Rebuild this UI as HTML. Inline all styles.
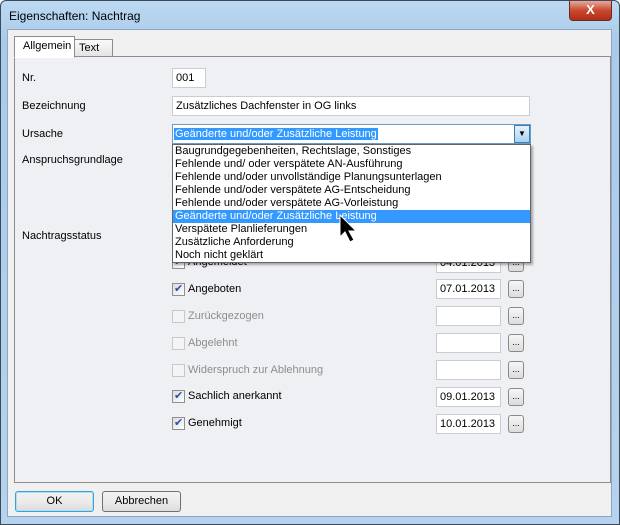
<!DOCTYPE html><html><head><style>
*{margin:0;padding:0;box-sizing:border-box}
body{width:620px;height:525px;overflow:hidden;font-family:"Liberation Sans",sans-serif;font-size:11px;color:#000;background:#fff}
.win{position:absolute;left:0;top:0;width:620px;height:525px;background:linear-gradient(#bcd9f2,#a9cbe9 40px,#b5d3ee);border:1px solid #3c4a5a;border-radius:6px 6px 0 0}
.title{position:absolute;left:8px;top:8px;font-size:12px}
.close{position:absolute;left:568px;top:0;width:43px;height:20px;background:linear-gradient(#e9a99b,#c8492f 50%,#b22c14);border:1px solid #6b2a1d;border-top:none;border-radius:0 0 4px 4px;color:#fff;text-align:center;font-weight:bold;font-size:13px;line-height:18px}
.client{position:absolute;left:7px;top:29px;width:605px;height:488px;background:#f0f0f0;border:1px solid #8ea6bf}
.panel{position:absolute;left:14px;top:56px;width:597px;height:427px;background:#eef0f4;border:1px solid #8d8d8d}
.tab{position:absolute;border:1px solid #8d8d8d;border-bottom:none;background:#fff}
.abs{position:absolute}
.in{position:absolute;background:#fff;border:1px solid #c8cdd4;height:20px;line-height:18px;padding-left:3px;font-size:11px}
.cb{position:absolute;width:13px;height:13px;border:1px solid #8f8f8f;background:linear-gradient(135deg,#dcdcdc,#fff)}
.cb.on::after{content:"✔";position:absolute;left:1px;top:-2px;color:#2d4fa8;font-size:11px}
.cb.off{border-color:#c8c8c8;background:#f4f4f4}
.dot{position:absolute;width:16px;height:18px;border:1px solid #8a8a8a;border-radius:3px;background:linear-gradient(#f6f6f6,#dcdcdc);font-size:9px;text-align:center;line-height:15px}
.btn{position:absolute;top:491px;width:79px;height:21px;border:1px solid #707070;border-radius:3px;background:linear-gradient(#f2f2f2,#ebebeb 50%,#dcdcdc);text-align:center;line-height:19px;font-size:11px}
.list div{height:13px;line-height:13px;padding-left:2px;white-space:nowrap}
</style></head><body>
<div class="win">
<div class="title">Eigenschaften: Nachtrag</div>
<div class="close">X</div>
</div>
<div class="client"></div>
<div class="panel"></div>
<div class="tab" style="left:73px;top:39px;width:40px;height:17px;background:linear-gradient(#fafafa,#e4e4e4);padding:2px 0 0 5px">Text</div>
<div class="tab" style="left:14px;top:36px;width:61px;height:22px;padding:3px 0 0 8px;border-bottom:1px solid #fff">Allgemein</div>

<div class="abs" style="left:22px;top:72px">Nr.</div>
<div class="abs" style="left:22px;top:100px">Bezeichnung</div>
<div class="abs" style="left:22px;top:128px">Ursache</div>
<div class="abs" style="left:22px;top:154px">Anspruchsgrundlage</div>
<div class="abs" style="left:22px;top:230px">Nachtragsstatus</div>

<div class="in" style="left:172px;top:68px;width:34px">001</div>
<div class="in" style="left:172px;top:96px;width:358px">Zusätzliches Dachfenster in OG links</div>
<div class="in" style="left:172px;top:124px;width:359px;border-color:#6c9bc8;padding-left:1px"><span style="background:#3399ff;color:#fff;padding:0 1px">Geänderte und/oder Zusätzliche Leistung</span>
<div style="position:absolute;right:0;top:0;width:16px;height:18px;background:linear-gradient(#e6f2fb,#a9d0ef);border:1px solid #3c7fb1;font-size:8px;text-align:center;line-height:16px">▼</div></div>

<div class="cb on" style="left:172px;top:256px"></div><div class="abs" style="left:188px;top:256px">Angemeldet</div>
<div class="in" style="left:436px;top:253px;width:65px">04.01.2013</div><div class="dot" style="left:508px;top:254px">...</div>

<div class="list abs" style="left:172px;top:144px;width:359px;height:119px;background:#fff;border:1px solid #646464;box-shadow:2px 2px 2px rgba(0,0,0,.3)">
<div>Baugrundgegebenheiten, Rechtslage, Sonstiges</div>
<div>Fehlende und/ oder verspätete AN-Ausführung</div>
<div>Fehlende und/oder unvollständige Planungsunterlagen</div>
<div>Fehlende und/oder verspätete AG-Entscheidung</div>
<div>Fehlende und/oder verspätete AG-Vorleistung</div>
<div style="background:#3399ff;color:#fff">Geänderte und/oder Zusätzliche Leistung</div>
<div>Verspätete Planlieferungen</div>
<div>Zusätzliche Anforderung</div>
<div>Noch nicht geklärt</div>
</div>
<svg class="abs" style="left:339px;top:214px" width="22" height="32"><path d="M1 1 L1 23 L6 18 L11 28 L15 26 L10 17 L17 17 Z" fill="#000" stroke="#fff" stroke-width="1"/></svg>

<div class="cb on" style="left:172px;top:283px"></div><div class="abs" style="left:188px;top:283px">Angeboten</div>
<div class="in" style="left:436px;top:279px;width:65px">07.01.2013</div><div class="dot" style="left:508px;top:280px">...</div>
<div class="cb off" style="left:172px;top:310px"></div><div class="abs" style="left:188px;top:310px;color:#8d8d8d">Zurückgezogen</div>
<div class="in" style="left:436px;top:306px;width:65px"></div><div class="dot" style="left:508px;top:307px">...</div>
<div class="cb off" style="left:172px;top:337px"></div><div class="abs" style="left:188px;top:337px;color:#8d8d8d">Abgelehnt</div>
<div class="in" style="left:436px;top:333px;width:65px"></div><div class="dot" style="left:508px;top:334px">...</div>
<div class="cb off" style="left:172px;top:364px"></div><div class="abs" style="left:188px;top:364px;color:#8d8d8d">Widerspruch zur Ablehnung</div>
<div class="in" style="left:436px;top:360px;width:65px"></div><div class="dot" style="left:508px;top:361px">...</div>
<div class="cb on" style="left:172px;top:390px"></div><div class="abs" style="left:188px;top:390px">Sachlich anerkannt</div>
<div class="in" style="left:436px;top:387px;width:65px">09.01.2013</div><div class="dot" style="left:508px;top:388px">...</div>
<div class="cb on" style="left:172px;top:417px"></div><div class="abs" style="left:188px;top:417px">Genehmigt</div>
<div class="in" style="left:436px;top:414px;width:65px">10.01.2013</div><div class="dot" style="left:508px;top:415px">...</div>

<div class="btn" style="left:15px;border-color:#3c9fd6;box-shadow:inset 0 0 0 1px #a9e0f8">OK</div>
<div class="btn" style="left:102px">Abbrechen</div>
</body></html>
